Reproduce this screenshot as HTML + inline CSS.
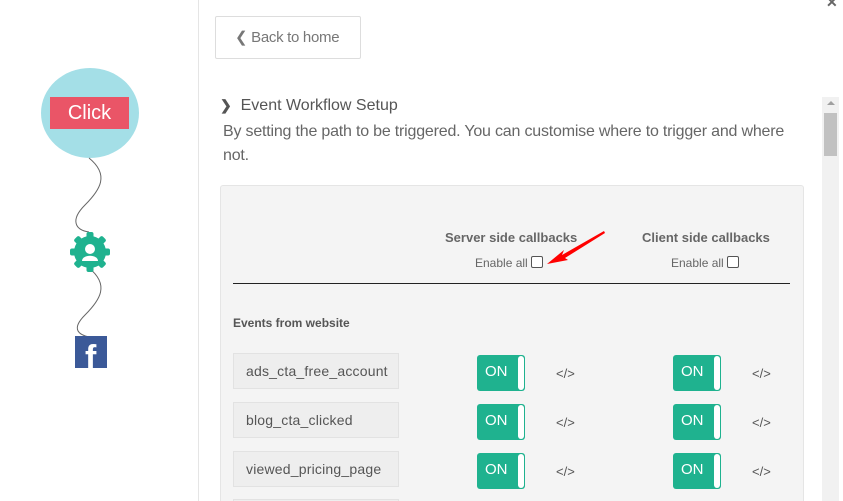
<!DOCTYPE html>
<html style="width:843px;height:501px;overflow:hidden"><head><style>
*{margin:0;padding:0;box-sizing:border-box}
body{width:843px;height:501px;overflow:hidden;background:#fff;font-family:"Liberation Sans",sans-serif;position:relative;color:#555}
.a{position:absolute}
.inp{position:absolute;left:233px;width:166px;height:36px;background:#eeeeee;border:1px solid #e2e2e2;font-size:14px;color:#555;padding:9px 0 0 12px;letter-spacing:0.2px}
.tg{position:absolute;width:48px;height:36px;background:#1fb28f;border-radius:3px;color:#fff;font-size:15px;padding:8px 0 0 8px}
.tg:after{content:"";position:absolute;right:1px;top:1px;width:6px;height:34px;background:#fff;border-radius:3px}
.code{position:absolute;font-size:13px;color:#555}
</style></head><body>
<div class="a" style="left:198px;top:0;width:1px;height:501px;background:#e5e5e5"></div>
<div class="a" style="left:41px;top:68px;width:98px;height:90px;border-radius:50%;background:#a4dfe7"></div>
<div class="a" style="left:50px;top:97px;width:79px;height:32px;background:#ea5567;color:#fff;font-size:20px;text-align:center;line-height:32px">Click</div>
<svg class="a" style="left:0;top:0" width="200" height="380">
<path d="M89 158 C110 175,100 190,85 205 C70 220,75 230,89 232" fill="none" stroke="#666" stroke-width="1"/>
<path d="M89 268 C110 285,100 300,85 315 C70 330,80 335,89 337" fill="none" stroke="#666" stroke-width="1"/>
<g transform="translate(90,252)" fill="#1fb28f">
<circle r="16"/>
<g><rect x="-3.5" y="-20" width="7" height="40" rx="2"/><rect x="-3.5" y="-20" width="7" height="40" rx="2" transform="rotate(45)"/><rect x="-3.5" y="-20" width="7" height="40" rx="2" transform="rotate(90)"/><rect x="-3.5" y="-20" width="7" height="40" rx="2" transform="rotate(135)"/></g>
<circle cy="-3" r="5" fill="#fff"/><path d="M-8 9 C-8 2,8 2,8 9 Z" fill="#fff"/>
</g>
<rect x="75" y="336" width="32" height="32" fill="#3b5998"/>
<text x="85" y="369" font-family="Liberation Sans" font-weight="bold" font-size="34" fill="#fff">f</text>
</svg>
<div class="a" style="left:215px;top:16px;width:146px;height:43px;border:1px solid #ddd;border-radius:2px;font-size:15px;color:#777;padding:11px 0 0 19px;letter-spacing:-0.3px">❮ Back to home</div>
<div class="a" style="left:826px;top:-6px;font-size:14px;color:#666;font-weight:bold">✕</div>
<div class="a" style="left:220px;top:97px;font-size:16px;color:#555"><b style="font-size:14px">❯</b>&nbsp; Event Workflow Setup</div>
<div class="a" style="left:223px;top:120px;width:585px;font-size:16px;color:#666;line-height:24px;letter-spacing:-0.2px">By setting the path to be triggered. You can customise where to trigger and where not.</div>
<div class="a" style="left:822px;top:97px;width:17px;height:404px;background:#f1f1f1"></div>
<div class="a" style="left:824px;top:113px;width:13px;height:43px;background:#c1c1c1"></div>
<div class="a" style="left:827px;top:101px;width:0;height:0;border-left:4px solid transparent;border-right:4px solid transparent;border-bottom:4px solid #a0a0a0"></div>
<div class="a" style="left:220px;top:185px;width:584px;height:316px;background:#f4f4f4;border:1px solid #e5e5e5;border-bottom:none;border-radius:3px 3px 0 0"></div>
<div class="a" style="left:445px;top:230px;font-size:13px;font-weight:bold;color:#666">Server side callbacks</div>
<div class="a" style="left:642px;top:230px;font-size:13px;font-weight:bold;color:#666">Client side callbacks</div>
<div class="a" style="left:475px;top:256px;font-size:12px;color:#666">Enable all <span style="display:inline-block;width:12px;height:12px;border:1px solid #555;border-radius:2px;vertical-align:-1px;background:#fff"></span></div>
<div class="a" style="left:671px;top:256px;font-size:12px;color:#666">Enable all <span style="display:inline-block;width:12px;height:12px;border:1px solid #555;border-radius:2px;vertical-align:-1px;background:#fff"></span></div>
<svg class="a" style="left:540px;top:225px" width="70" height="45"><path d="M64 6 L22 30 L24 25 L7 39 L28 35 L25 33 L65 8 Z" fill="#f00"/></svg>
<div class="a" style="left:233px;top:283px;width:557px;height:1px;background:#222"></div>
<div class="a" style="left:233px;top:316px;font-size:12px;font-weight:bold;color:#555">Events from website</div>
<div class="inp" style="top:353px">ads_cta_free_account</div>
<div class="inp" style="top:402px">blog_cta_clicked</div>
<div class="inp" style="top:451px">viewed_pricing_page</div>
<div class="inp" style="top:499px;height:2px;padding:0;border-bottom:none"></div>
<div class="tg" style="left:477px;top:355px">ON</div>
<div class="tg" style="left:477px;top:404px">ON</div>
<div class="tg" style="left:477px;top:453px">ON</div>
<div class="tg" style="left:673px;top:355px">ON</div>
<div class="tg" style="left:673px;top:404px">ON</div>
<div class="tg" style="left:673px;top:453px">ON</div>
<div class="code" style="left:556px;top:366px">&lt;/&gt;</div>
<div class="code" style="left:556px;top:415px">&lt;/&gt;</div>
<div class="code" style="left:556px;top:464px">&lt;/&gt;</div>
<div class="code" style="left:752px;top:366px">&lt;/&gt;</div>
<div class="code" style="left:752px;top:415px">&lt;/&gt;</div>
<div class="code" style="left:752px;top:464px">&lt;/&gt;</div>
</body></html>
